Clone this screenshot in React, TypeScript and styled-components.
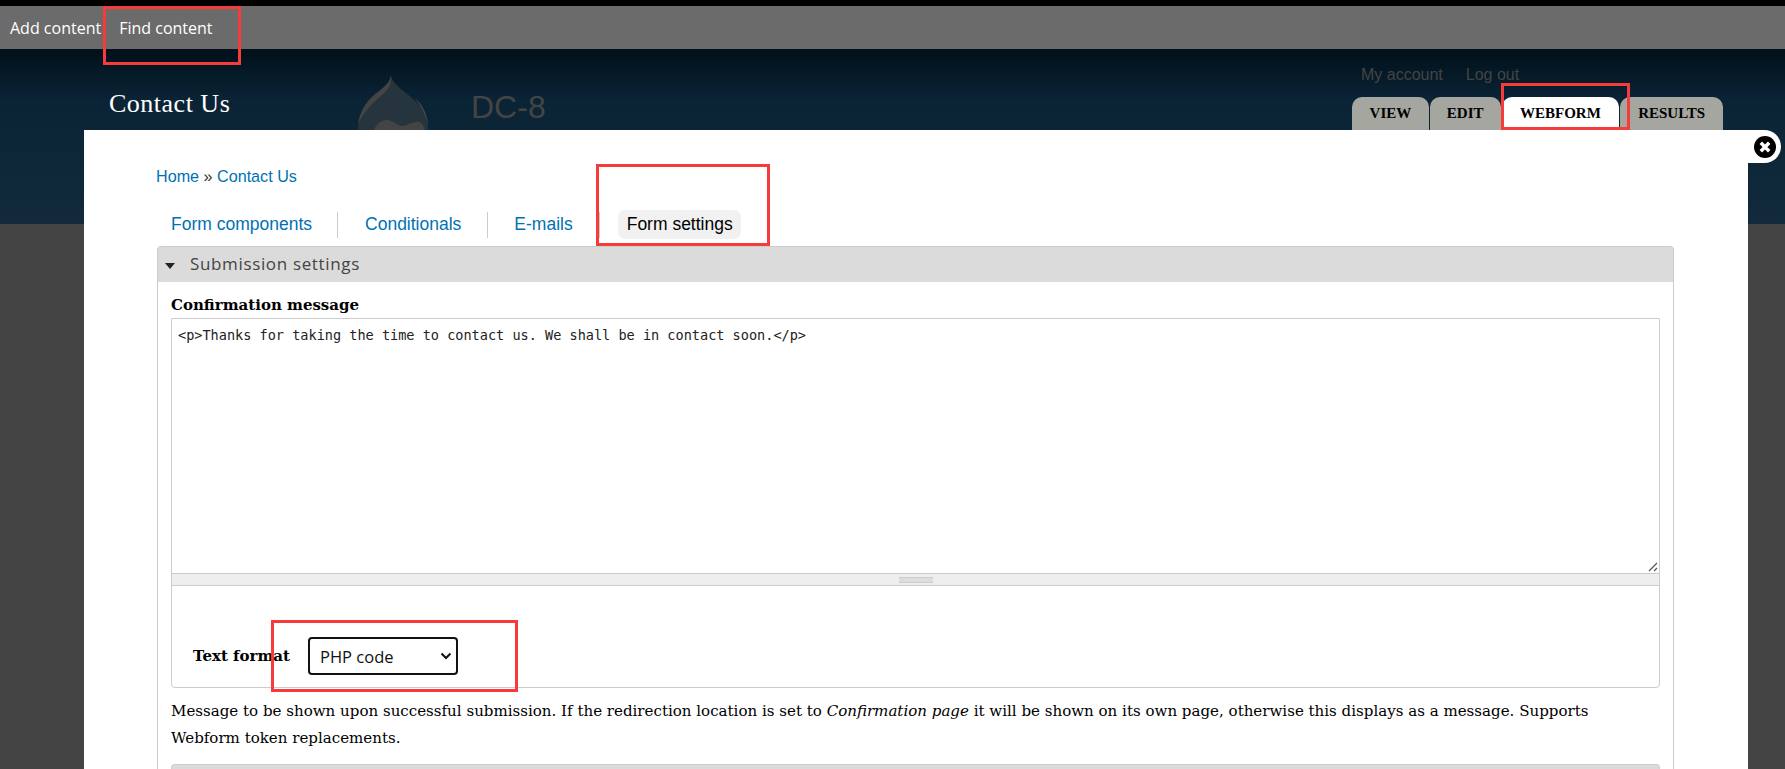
import styled, { createGlobalStyle } from 'styled-components';

const GlobalStyle = createGlobalStyle`
  html, body {
    margin: 0;
    padding: 0;
    background: #444;
  }
  body {
    width: 1785px;
    height: 769px;
    overflow: hidden;
  }
`;

const Page = styled.div`
  position: relative;
  width: 1785px;
  height: 769px;
  overflow: hidden;
  background: #444;
  border-top: 6px solid #000;
  box-sizing: border-box;
`;

const Toolbar = styled.div`
  height: 43px;
  background: #6b6b6b;
  display: flex;
  align-items: center;
  padding: 0 0 0 10px;
  box-sizing: border-box;
  gap: 18px;
`;

const ToolbarLink = styled.a`
  color: #fff;
  font: 16px 'Open Sans', sans-serif;
`;

const Header = styled.header`
  height: 175px;
  background: linear-gradient(#01101a, #0a2436 30%, #122a3b);
  padding: 0 62px 0 109px;
  display: flex;
  justify-content: space-between;
`;

const Brand = styled.div`
  display: flex;
  align-items: flex-start;
`;

const SiteTitle = styled.div`
  color: #fff;
  font: 26px 'Liberation Serif', serif;
  letter-spacing: 0.5px;
  width: 248px;
  margin-top: 40px;
`;

const DropLogo = styled.svg`
  width: 74px;
  height: 90px;
  margin-top: 25px;
  flex: none;
`;

const SiteName = styled.div`
  color: #444;
  font: 32px 'Liberation Sans', sans-serif;
  margin: 40px 0 0 40px;
`;

const HeaderRight = styled.div`
  display: flex;
  flex-direction: column;
  width: 371px;
`;

const UserLinks = styled.div`
  display: flex;
  gap: 23px;
  margin: 17px 0 0 9px;
  color: #444;
  font: 16px 'Liberation Sans', sans-serif;
`;

const Tabs = styled.div`
  display: flex;
  gap: 1px;
  margin-top: 13px;
`;

const Tab = styled.div<{ $width: number; $active?: boolean }>`
  width: ${p => p.$width}px;
  height: 34px;
  box-sizing: border-box;
  padding-top: 8px;
  border-radius: 10px 10px 0 0;
  background: ${p => (p.$active ? '#fff' : '#a6a6a0')};
  color: #000;
  text-align: center;
  font: bold 15px 'Liberation Serif', serif;
  text-transform: uppercase;
`;

const Modal = styled.main`
  position: absolute;
  left: 84px;
  top: 124px;
  width: 1664px;
  height: 645px;
  background: #fff;
  box-sizing: border-box;
  padding: 35px 74px 0 73px;
`;

const CloseButton = styled.div`
  position: absolute;
  left: 1742px;
  top: 124px;
  width: 32px;
  height: 33px;
  padding-left: 7px;
  background: #fff;
  border-radius: 0 17px 17px 0;
  display: flex;
  align-items: center;
  justify-content: center;
`;

const Breadcrumb = styled.div`
  font: 16.15px/23px 'Liberation Sans', sans-serif;
  color: #333;
  height: 45px;
  margin-left: -1px;
`;

const Link = styled.a`
  color: #0071b3;
`;

const SecondaryTabs = styled.nav`
  display: flex;
  align-items: center;
  height: 29px;
  margin: 0 0 7px 5.5px;
`;

const SecondaryTab = styled.div<{ $active?: boolean }>`
  font: 17.5px 'Liberation Sans', sans-serif;
  color: ${p => (p.$active ? '#000' : '#0071b3')};
  background: ${p => (p.$active ? '#f1f1f1' : 'transparent')};
  border-radius: 7px;
  height: 29px;
  line-height: 29px;
  padding: 0 8.5px;
`;

const Separator = styled.span<{ $gap: number; $after: number }>`
  width: 1px;
  height: 26px;
  background: #ccc;
  margin: 0 ${p => p.$after}px 0 ${p => p.$gap}px;
`;

const Fieldset = styled.section`
  border: 1px solid #ccc;
  border-bottom: none;
  border-radius: 4px 4px 0 0;
  height: 600px;
  box-sizing: border-box;
`;

const Legend = styled.div`
  height: 35px;
  box-sizing: border-box;
  padding: 0 0 2px 7px;
  background: #dbdbdb;
  display: flex;
  align-items: center;
  gap: 15px;
  color: #444;
  font: 17px 'Open Sans', sans-serif;
  letter-spacing: 0.65px;
`;

const Caret = styled.span`
  width: 0;
  height: 0;
  margin-top: 5px;
  border-left: 5px solid transparent;
  border-right: 5px solid transparent;
  border-top: 6px solid #222;
`;

const FieldBody = styled.div`
  padding: 14px 13px 0 13px;
`;

const FieldLabel = styled.div`
  font: bold 15px 'DejaVu Serif', serif;
  color: #000;
  height: 22px;
`;

const EditorBox = styled.div`
  border: 1px solid #ccc;
  border-radius: 0 0 4px 4px;
  height: 370px;
  box-sizing: border-box;
`;

const EditorText = styled.div`
  position: relative;
  height: 254px;
  box-sizing: border-box;
  padding: 8px 6px;
  font: 13.55px 'DejaVu Sans Mono', monospace;
  color: #222;
`;

const ResizeGrip = styled.svg`
  position: absolute;
  right: 1px;
  bottom: 1px;
  width: 10px;
  height: 10px;
`;

const DragBar = styled.div`
  height: 11px;
  background: #eee;
  border-top: 1px solid #ccc;
  border-bottom: 1px solid #ccc;
  display: flex;
  align-items: center;
  justify-content: center;
`;

const DragHandle = styled.span`
  width: 34px;
  height: 4px;
  border-top: 1px solid #ccc;
  border-bottom: 1px solid #ccc;
  background: #ddd;
`;

const FormatRow = styled.div`
  display: flex;
  align-items: center;
  gap: 16px;
  padding: 51px 0 0 21px;
`;

const FormatLabel = styled.span`
  width: 99px;
  white-space: nowrap;
  font: bold 15px 'DejaVu Serif', serif;
  color: #000;
`;

const FormatSelect = styled.div`
  width: 150px;
  height: 38px;
  box-sizing: border-box;
  border: 2px solid #111;
  border-radius: 4px;
  display: flex;
  align-items: center;
  justify-content: space-between;
  padding: 0 4px 0 10px;
  font: 16.5px 'Open Sans', sans-serif;
  color: #111;
`;

const Description = styled.p`
  margin: 10px 0 0;
  max-width: 1440px;
  font: 15.05px/27px 'DejaVu Serif', serif;
  color: #000;
`;

const NextLegend = styled.div`
  height: 30px;
  margin-top: 12px;
  background: #dbdbdb;
  border: 1px solid #ccc;
  border-bottom: none;
  border-radius: 4px 4px 0 0;
`;

const Marker = styled.div<{ $x: number; $y: number; $w: number; $h: number }>`
  position: absolute;
  left: ${p => p.$x}px;
  top: ${p => p.$y - 6}px;
  width: ${p => p.$w}px;
  height: ${p => p.$h}px;
  box-sizing: border-box;
  border: 3px solid #f73b3b;
`;

export default function App() {
  return (
    <>
      <GlobalStyle />
      <Page>
        <Toolbar>
          <ToolbarLink>Add content</ToolbarLink>
          <ToolbarLink>Find content</ToolbarLink>
        </Toolbar>
        <Header>
          <Brand>
            <SiteTitle>Contact Us</SiteTitle>
            <DropLogo viewBox="0 0 74 90">
              <path
                d="M34 1c1 9 11 14 21 23 10 9 16 20 16 32 0 20-16 34-35 34S1 76 1 56c0-14 7-24 15-31C25 17 33 11 34 1z"
                fill="#26343e"
              />
              <path d="M34 1C34 8 26 14 17 21 8 29 3 38 1 50 6 40 14 30 24 22 30 17 35 12 34 1z" fill="#444" />
              <path d="M58 24C66 31 71 41 71 52 69 42 64 33 58 24z" fill="#444" />
              <path
                d="M16 60C18 50 24 46 30 46 36 46 40 52 45 52 50 52 56 47 62 48 66 49 68 54 68 60V90H16z"
                fill="#444"
              />
            </DropLogo>
            <SiteName>DC-8</SiteName>
          </Brand>
          <HeaderRight>
            <UserLinks>
              <span>My account</span>
              <span>Log out</span>
            </UserLinks>
            <Tabs>
              <Tab $width={77}>View</Tab>
              <Tab $width={71}>Edit</Tab>
              <Tab $width={118} $active>Webform</Tab>
              <Tab $width={103}>Results</Tab>
            </Tabs>
          </HeaderRight>
        </Header>
        <Modal>
          <Breadcrumb>
            <Link>Home</Link> » <Link>Contact Us</Link>
          </Breadcrumb>
          <SecondaryTabs>
            <SecondaryTab>Form components</SecondaryTab>
            <Separator $gap={16.5} $after={18.5} />
            <SecondaryTab>Conditionals</SecondaryTab>
            <Separator $gap={17.5} $after={17.5} />
            <SecondaryTab>E-mails</SecondaryTab>
            <Separator $gap={18} $after={18} />
            <SecondaryTab $active>Form settings</SecondaryTab>
          </SecondaryTabs>
          <Fieldset>
            <Legend>
              <Caret />
              Submission settings
            </Legend>
            <FieldBody>
              <FieldLabel>Confirmation message</FieldLabel>
              <EditorBox>
                <EditorText>
                  {'<p>Thanks for taking the time to contact us. We shall be in contact soon.</p>'}
                  <ResizeGrip viewBox="0 0 10 10">
                    <path d="M1 9l8-8M6 9l3-3" stroke="#555" strokeWidth="1.2" />
                  </ResizeGrip>
                </EditorText>
                <DragBar>
                  <DragHandle />
                </DragBar>
                <FormatRow>
                  <FormatLabel>Text format</FormatLabel>
                  <FormatSelect>
                    PHP code
                    <svg width="12" height="8" viewBox="0 0 12 8">
                      <path d="M1.5 1.5L6 6l4.500-4.500" fill="none" stroke="#111" strokeWidth="2" />
                    </svg>
                  </FormatSelect>
                </FormatRow>
              </EditorBox>
              <Description>
                Message to be shown upon successful submission. If the redirection location is set to{' '}
                <em>Confirmation page</em> it will be shown on its own page, otherwise this displays as
                a message. Supports Webform token replacements.
              </Description>
              <NextLegend />
            </FieldBody>
          </Fieldset>
        </Modal>
        <CloseButton>
          <svg width="22" height="22" viewBox="0 0 22 22">
            <circle cx="11" cy="11" r="11" fill="#000" />
            <path d="M6.800 6.800l8.400 8.400M15.200 6.800l-8.400 8.400" stroke="#fff" strokeWidth="3.500" />
          </svg>
        </CloseButton>
        <Marker $x={103} $y={6} $w={138} $h={59} />
        <Marker $x={596} $y={164} $w={174} $h={82} />
        <Marker $x={1501} $y={83} $w={129} $h={47} />
        <Marker $x={271} $y={620} $w={247} $h={72} />
      </Page>
    </>
  );
}
